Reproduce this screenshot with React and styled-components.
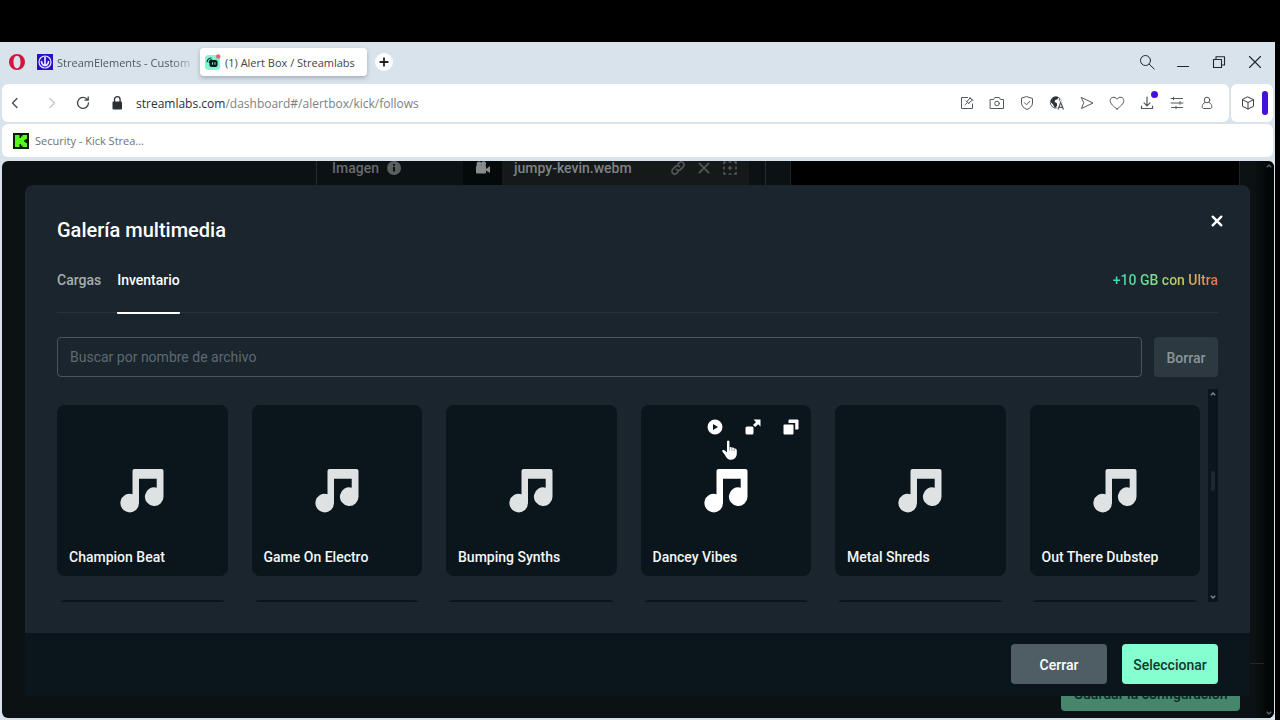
import React from "react";
import styled, { createGlobalStyle, css } from "styled-components";

const GlobalStyle = createGlobalStyle`
  *, *::before, *::after { box-sizing: border-box; }
  body { margin: 0; background: #000; }
  button, input { font: inherit; margin: 0; }
  svg { display: block; flex: none; }
`;

const chromeFont = `"Open Sans", "Noto Sans", sans-serif`;
const appFont = `Roboto, "Liberation Sans", sans-serif`;

/* ---------- browser window ---------- */

const Screen = styled.div`
  min-height: 100vh;
  padding: 42px 5px 0 0;
  display: flex;
  background: #000;
`;

const Browser = styled.div`
  flex: 1;
  min-width: 0;
  display: flex;
  flex-direction: column;
  background: #d9e3eb;
  font-family: ${chromeFont};
  font-size: 11px;
  color: #44494e;
`;

const PlainButton = styled.button`
  border: 0;
  padding: 0;
  background: none;
  color: inherit;
  display: flex;
  align-items: center;
  justify-content: center;
  cursor: pointer;
`;

const TabBar = styled.header`
  height: 42px;
  padding: 0 12px 2px 9px;
  display: flex;
  align-items: center;
`;

const TabStrip = styled.nav`
  flex: 1;
  display: flex;
  align-items: center;
  margin-left: 8px;
`;

const Tab = styled.a`
  height: 28px;
  width: ${(p) => p.$width}px;
  padding: 0 4px;
  display: flex;
  align-items: center;
  gap: 4px;
  border-radius: 4px;
  color: #50585f;
  text-decoration: none;
  white-space: nowrap;
  ${(p) =>
    p.$active &&
    css`
      padding-left: 5px;
      background: #fff;
      color: #3f4448;
      box-shadow: 0 2px 4px rgba(60, 75, 90, 0.35);
    `}
`;

const TabLabel = styled.span`
  ${(p) =>
    p.$fade &&
    css`
      mask-image: linear-gradient(to right, #000 86%, rgba(0, 0, 0, 0.3));
    `}
`;

const NewTab = styled(PlainButton)`
  width: 18px;
  height: 18px;
  margin-left: 8px;
  border-radius: 50%;
  background: #fff;
  color: #1d2226;
`;

const WindowControls = styled.div`
  display: flex;
  gap: 20px;
  color: #20262b;
`;

const Bars = styled.div`
  display: flex;
  gap: 2px;
  padding: 0 2px;
`;

const Bar = styled.div`
  height: 38px;
  display: flex;
  align-items: center;
  background: #fff;
  border-radius: 6px;
`;

const AddressBar = styled(Bar)`
  flex: 1;
  padding: 0 14px 0 5px;
`;

const Navigation = styled.div`
  display: flex;
  align-items: center;
  gap: 15px;
  padding-right: 18px;
`;

const Address = styled.span`
  flex: 1;
  padding-left: 11px;
  color: #7a7f84;
  font-size: 12px;
  b {
    font-weight: 400;
    color: #2b3034;
  }
`;

const Tools = styled.div`
  display: flex;
  gap: 14px;
  color: #54595e;
`;

const ToolButton = styled(PlainButton)`
  position: relative;
  width: 16px;
  height: 16px;
`;

const BackButton = styled(ToolButton)`
  margin-right: 6px;
`;

const ForwardButton = styled(ToolButton)`
  color: #c5c8cb;
`;

const Dot = styled.span`
  position: absolute;
  top: -4px;
  right: -3px;
  width: 7px;
  height: 7px;
  border-radius: 50%;
  background: #4410dc;
`;

const SideBar = styled(Bar)`
  width: 42px;
  padding: 0 5px 0 9px;
  justify-content: space-between;
  color: #3a4045;
`;

const SideMark = styled.span`
  width: 6px;
  height: 24px;
  border-radius: 3px;
  background: #4410dc;
`;

const Bookmarks = styled(Bar)`
  height: 33px;
  margin: 2px 2px 4px;
  padding: 0 11px;
`;

const Bookmark = styled.a`
  display: flex;
  align-items: center;
  gap: 6px;
  color: #6d7277;
  text-decoration: none;
`;

/* ---------- page behind the dialog ---------- */

const Page = styled.main`
  flex: 1;
  position: relative;
  overflow: hidden;
  margin: 0 1px 2px 2px;
  padding: 24px 24px 22px 23px;
  border-radius: 6px;
  background: #0c1214;
  font-family: ${appFont};
  font-size: 14px;
`;

const Backdrop = styled.div`
  position: absolute;
  inset: 0;
  padding: 0 34px 7px 314px;
  display: flex;
  flex-direction: column;
  justify-content: space-between;
  background: linear-gradient(to right, transparent calc(100% - 20px), #020606 calc(100% - 6px));
`;

const Settings = styled.div`
  height: 200px;
  display: flex;
  gap: 24px;
`;

const SettingsPanel = styled.div`
  width: 450px;
  padding: 0 16px 0 15px;
  border: solid #272d2f;
  border-width: 0 1px;
`;

const SettingRow = styled.div`
  height: 40px;
  margin-top: -13px;
  display: flex;
  align-items: center;
  color: #75797a;
`;

const SettingName = styled.span`
  flex: 1;
  display: flex;
  align-items: center;
  gap: 8px;
  font-weight: 500;
  color: #676c6d;
`;

const MediaIcon = styled.span`
  width: 39px;
  height: 40px;
  display: grid;
  place-items: center;
  background: #040a0b;
`;

const MediaField = styled.span`
  width: 247px;
  height: 40px;
  padding: 0 11px 0 12px;
  display: flex;
  align-items: center;
  gap: 10px;
  background: #15191a;
  font-weight: 500;
  color: #7f8384;
`;

const MediaName = styled.span`
  flex: 1;
`;

const MediaTools = styled.span`
  display: flex;
  gap: 10px;
  color: #4f5455;
`;

const Preview = styled.div`
  flex: 1;
  background: #000;
  border: solid #1d2325;
  border-width: 0 1px;
`;

const SaveBar = styled.div`
  margin-right: -24px;
  padding: 13px 24px 0 0;
  border-top: 1px solid #24282a;
  display: flex;
  justify-content: flex-end;
`;

const SaveButton = styled.button`
  height: 34px;
  width: 179px;
  border: 0;
  padding: 0;
  border-radius: 4px;
  background: #46866d;
  color: #0b2a20;
  font-weight: 500;
`;

const PageScroll = styled.div`
  position: absolute;
  inset: 0 0 0 auto;
  width: 10px;
  padding: 3px 1px 3px 0;
  display: flex;
  flex-direction: column;
  align-items: center;
  justify-content: space-between;
  color: #5c6263;
`;

/* ---------- dialog ---------- */

const Dialog = styled.section`
  position: relative;
  border-radius: 8px 8px 0 0;
  overflow: hidden;
  background: #1a252d;
  color: #fff;
`;

const DialogBody = styled.div`
  padding: 32px 32px 31px;
`;

const DialogHead = styled.div`
  height: 26px;
  display: flex;
  justify-content: space-between;
`;

const Title = styled.h1`
  margin: 0;
  font-size: 20px;
  line-height: 26px;
  font-weight: 500;
`;

const CloseButton = styled(PlainButton)`
  width: 16px;
  height: 16px;
  margin-right: -7px;
  margin-top: -4px;
`;

const MediaTabs = styled.div`
  height: 70px;
  display: flex;
  align-items: flex-start;
  gap: 16px;
  border-bottom: 1px solid #26333a;
`;

const MediaTab = styled.button`
  height: 71px;
  padding: 28px 0 23px;
  border: 0;
  border-bottom: 2px solid ${(p) => (p.$active ? "#fff" : "transparent")};
  border-radius: 1px;
  background: none;
  color: ${(p) => (p.$active ? "#fff" : "#a3aeb2")};
  font-weight: 500;
  line-height: 18px;
`;

const UltraLink = styled.a`
  margin: 28px 0 0 auto;
  line-height: 18px;
  font-weight: 500;
  text-decoration: none;
  color: transparent;
  background: linear-gradient(to right, #31e1b0, #80e08a 40%, #d6c35a 68%, #ef6e55);
  background-clip: text;
`;

const SearchRow = styled.form`
  display: flex;
  gap: 12px;
  margin-top: 24px;
`;

const SearchInput = styled.input`
  flex: 1;
  min-width: 0;
  height: 40px;
  padding: 0 12px;
  border: 1px solid #4a565c;
  border-radius: 4px;
  background: transparent;
  color: #fff;
  outline: none;
  &::placeholder {
    color: #5f6a70;
    opacity: 1;
  }
`;

const ActionButton = styled.button`
  height: 40px;
  width: ${(p) => p.$width}px;
  padding: 1px 0 0;
  border: 0;
  border-radius: 4px;
  font-weight: 500;
  background: ${(p) => p.$bg};
  color: ${(p) => p.$fg};
`;

const Library = styled.div`
  height: 213px;
  margin-top: 12px;
  display: flex;
  gap: 8px;
  overflow: hidden;
`;

const Grid = styled.ul`
  flex: 1;
  margin: 0;
  padding: 16px 0 0;
  list-style: none;
  display: grid;
  grid-template-columns: repeat(6, 1fr);
  align-content: start;
  gap: 24px;
`;

const Card = styled.li`
  position: relative;
  aspect-ratio: 1;
  padding: 14px 12px 12px;
  display: grid;
  grid-template-rows: 1fr 44px 1fr;
  justify-items: center;
  border-radius: 8px;
  background: #0a161b;
  color: ${(p) => (p.$hover ? "#fff" : "#dfe2e3")};
`;

const CardActions = styled.div`
  justify-self: end;
  display: flex;
  gap: 22px;
  color: #fff;
`;

const CardAction = styled(PlainButton)`
  width: 16px;
  height: 15px;
`;

const CardName = styled.span`
  align-self: end;
  justify-self: start;
  line-height: 14px;
  font-weight: 500;
  color: #f5f7f7;
`;

const Pointer = styled.svg`
  position: absolute;
  left: 80px;
  top: 34px;
`;

const Scrollbar = styled.div`
  width: 10px;
  padding: 3px 0;
  display: flex;
  flex-direction: column;
  align-items: center;
  justify-content: space-between;
  background: #0a161d;
  color: #7c868b;
`;

const ScrollThumb = styled.span`
  width: 4px;
  height: 20px;
  margin-top: -30px;
  border-radius: 2px;
  background: #1d292f;
`;

const DialogFoot = styled.footer`
  padding: 11px 32px 12px;
  display: flex;
  justify-content: flex-end;
  gap: 15px;
  background: #0a161b;
`;

/* ---------- icons ---------- */

const Line = ({ size = 16, width = 1, children }) => (
  <svg width={size} height={size} viewBox="0 0 16 16" fill="none" stroke="currentColor"
    strokeWidth={width} strokeLinecap="round" strokeLinejoin="round">{children}</svg>
);

const OperaLogo = () => (
  <svg width="16" height="16" viewBox="0 0 16 16" fill="#d5143c">
    <path fillRule="evenodd" d="M8 0a8 8 0 1 0 0 16A8 8 0 0 0 8 0Zm0 1.700c2.200 0 3.500 2.800 3.500 6.300s-1.300 6.300-3.500 6.300-3.500-2.800-3.500-6.300S5.800 1.700 8 1.700Z" />
  </svg>
);

const StreamElementsLogo = () => (
  <svg width="16" height="16" viewBox="0 0 16 16">
    <rect width="16" height="16" fill="#2a0fc4" />
    <g fill="none" stroke="#e8e6ff" strokeLinecap="round">
      <circle cx="8" cy="8" r="6" strokeWidth="1.200" />
      <path d="M8 3v8M4.500 7.500c.2 2.300 1.500 3.600 3.500 3.600s3.300-1.300 3.500-3.600M6 11.500h4" strokeWidth="1.700" />
    </g>
  </svg>
);

const StreamlabsLogo = () => (
  <svg width="16" height="16" viewBox="0 0 16 16">
    <rect width="15" height="15" y="1" rx="3.500" fill="#80f5d2" />
    <path d="M2.200 7.600C2.500 5.600 4 4.200 6 4M4.300 8.500C4.400 7 5.400 6 6.800 5.900" fill="none" stroke="#0b2422" strokeWidth="1.200" strokeLinecap="round" />
    <rect x="4.500" y="6" width="8" height="7" rx="2" fill="#09191b" />
    <path d="M7.500 8.700v1.600M10 8.700v1.600" stroke="#80f5d2" strokeLinecap="round" />
    <circle cx="13.200" cy="2.500" r="2.200" fill="#f0606a" />
  </svg>
);

const KickLogo = () => (
  <svg width="16" height="16" viewBox="0 0 16 16">
    <rect width="16" height="16" fill="#0c1a0a" />
    <path d="M2 2h4.500v3H8V3.500h1.500V2H14v4h-1.500v1.200H11v1.600h1.500V10H14v4H9.500v-1.500H8V11H6.500v3H2Z" fill="#53fc18" />
  </svg>
);

const toolIcons = [
  ["Edit page", <Line><path d="M8.500 2.500h-6v11h11V9M6 9.800 8.500 7.500M7.200 5.800l3 3M8 6.500l3-3.500 2.300 2.200-3.600 2.800M11 2.500l3 3" /></Line>],
  ["Snapshot", <Line><path d="M1.500 4.500H4.500l1.300-2h4.400l1.300 2h3v9h-13Z" /><circle cx="8" cy="8.500" r="2.300" /></Line>],
  ["Ad blocker", <Line><path d="M8 1.700 13.500 3.500V8c0 3-2.300 5.100-5.500 6.500C4.800 13.100 2.500 11 2.500 8V3.500ZM5.500 7.800l2 2 3.300-3.500" /></Line>],
  ["Translate", (
    <svg width="16" height="16" viewBox="0 0 16 16">
      <circle cx="7" cy="7.500" r="5.600" fill="none" stroke="currentColor" />
      <path d="M2 5c1-2.300 3-3.400 5-3.400l2.500.7-1 2-2.300.8L5.500 7l2.300 1 .3 2.500-1.600 2.300C5 12.800 4.500 10 3.700 9L2 7.600ZM10 4l1.800.3.7 3.200-1.700-.6Z" fill="#2e3337" />
      <path d="m9 14.500 2.700-7 2.800 7M10 12.300h3.500" fill="none" stroke="#fff" strokeWidth="3" />
      <path d="m9 14.500 2.700-7 2.800 7M10 12.300h3.500" fill="none" stroke="currentColor" strokeWidth="1.200" />
    </svg>
  )],
  ["Send", <Line><path d="m2.500 2.500 11.500 5.500-11.500 5.500L4.600 8Z" /></Line>],
  ["Save to pinboard", <Line><path d="M8 14C4.500 11.300 1.200 8.800 1.200 5.600 1.200 1.900 6 1 8 4.300 10 1 14.800 1.900 14.800 5.600 14.800 8.800 11.500 11.300 8 14Z" /></Line>],
  ["Downloads", <Line width={1.2}><path d="M8 2v8.500M5 7.800l3 3 3-3M2.500 11v2.500h11V11" /></Line>],
  ["Easy setup", <Line><path d="M2 3.500h11.500M2 8h12M2.500 12.500H13.500M4.500 2.200v2.600M11 6.700v2.600M7 11.200v2.600" /></Line>],
  ["Profile", <Line><circle cx="8" cy="5" r="2.800" /><path d="M5.800 7.500C4 8.500 3.200 10 3.200 11.800c0 1 .6 1.700 1.500 1.700h6.600c.9 0 1.500-.7 1.500-1.700 0-1.800-.8-3.300-2.600-4.300" /></Line>],
];

const MusicNote = () => (
  <svg width="44" height="44" viewBox="0 0 44 44" fill="currentColor">
    <path d="M12.500 2Q12.500 0 14.500 0H41.500Q43.500 0 43.500 2V27.500A9.300 9.300 0 1 1 36.700 18.700V9.700H19V34A9.300 9.300 0 1 1 12.500 25.200Z" />
  </svg>
);

const Arrow = ({ down }) => (
  <svg width="6" height="4" viewBox="0 0 6 4" fill="none" stroke="currentColor" strokeWidth="1.400">
    <path d={down ? "m.8.7 2.200 2.200L5.200.7" : "M.8 3.300 3 1.100l2.200 2.200"} />
  </svg>
);

const PlayIcon = () => (
  <svg width="16" height="16" viewBox="0 0 16 16" fill="currentColor">
    <path fillRule="evenodd" d="M8 .5a7.500 7.500 0 1 0 0 15 7.500 7.500 0 0 0 0-15ZM6 5v6l5-3Z" />
  </svg>
);

const ExpandIcon = () => (
  <svg width="16" height="16" viewBox="0 0 16 16" fill="currentColor">
    <rect x=".5" y="7.500" width="8" height="8" rx="1.500" />
    <path d="M8.500.5h7v7l-2.300-2.300-3 2.900-2.200-2.200 3-2.900Z" />
  </svg>
);

const CopyIcon = () => (
  <svg width="16" height="16" viewBox="0 0 16 16" fill="currentColor">
    <rect x=".5" y="5.500" width="10" height="10" rx="1" />
    <path d="M5.500 1.500q0-1 1-1h8q1 0 1 1v8q0 1-1 1H12.200V3.900H5.500Z" />
  </svg>
);

const HandPointer = () => (
  <Pointer width="18" height="22" viewBox="0 0 18 22" aria-hidden="true">
    <path d="M6 2.200Q7.200.8 8.400 2.200V8.200l1-.2q1 0 1.400.8l1-.2q1.100 0 1.500 1l.8-.1q1.700.1 1.700 1.900V14c0 3.800-1.900 6.700-5.700 6.700-3.400 0-4.600-2-6-4.500L1.500 12.800Q.700 11.500 1.800 11.100q1.400-.4 2.700 1L6 13.500Z" fill="#fff" />
    <path d="M8.500 8v3.500M10.900 9v2.700M13.300 9.800V12" stroke="#7d8588" strokeWidth=".8" />
  </Pointer>
);

/* ---------- content ---------- */

const tracks = [
  "Champion Beat",
  "Game On Electro",
  "Bumping Synths",
  "Dancey Vibes",
  "Metal Shreds",
  "Out There Dubstep",
];

function Track({ name, hover }) {
  return (
    <Card $hover={hover}>
      {hover ? (
        <CardActions>
          <CardAction aria-label="Reproducir"><PlayIcon /></CardAction>
          <CardAction aria-label="Ampliar"><ExpandIcon /></CardAction>
          <CardAction aria-label="Copiar"><CopyIcon /></CardAction>
        </CardActions>
      ) : <span />}
      <MusicNote />
      <CardName>{name}</CardName>
      {hover && <HandPointer />}
    </Card>
  );
}

export default function App() {
  return (
    <Screen>
      <GlobalStyle />
      <Browser>
        <TabBar>
          <OperaLogo />
          <TabStrip>
            <Tab href="#streamelements" $width={167}>
              <StreamElementsLogo />
              <TabLabel $fade>StreamElements - Custom</TabLabel>
            </Tab>
            <Tab href="#alertbox" $width={167} $active>
              <StreamlabsLogo />
              <TabLabel>(1) Alert Box / Streamlabs</TabLabel>
            </Tab>
            <NewTab aria-label="New tab"><Line size={12} width={2.4}><path d="M8 3v10M3 8h10" /></Line></NewTab>
          </TabStrip>
          <WindowControls>
            <ToolButton aria-label="Search tabs"><Line><circle cx="6.500" cy="6.500" r="5" /><path d="m10.200 10.200 5 4.800" /></Line></ToolButton>
            <ToolButton aria-label="Minimize"><Line width={1.2}><path d="M2.500 12.500h11" /></Line></ToolButton>
            <ToolButton aria-label="Restore"><Line width={1.1}><path d="M2.500 5.500h8v8h-8ZM5 5V2.800h8.500V11H11" /></Line></ToolButton>
            <ToolButton aria-label="Close"><Line width={1.1}><path d="m2.500 2.500 11 11M13.500 2.500l-11 11" /></Line></ToolButton>
          </WindowControls>
        </TabBar>

        <Bars>
          <AddressBar>
            <Navigation>
              <BackButton aria-label="Back"><Line width={1.3}><path d="M10 3.500 5.500 8l4.500 4.500" /></Line></BackButton>
              <ForwardButton aria-label="Forward" disabled><Line width={1.3}><path d="M6 3.500 10.500 8 6 12.500" /></Line></ForwardButton>
              <ToolButton aria-label="Reload"><Line width={1.3}><path d="M12.500 4.700A5.500 5.500 0 1 0 13.500 8M13.200 2v3.200H10" /></Line></ToolButton>
            </Navigation>
            <svg width="16" height="16" viewBox="0 0 16 16">
              <rect x="3.500" y="6.500" width="9.500" height="8" rx="1" fill="#2b3034" />
              <path d="M5.500 7V4.500a2.800 2.800 0 0 1 5.600 0V7" fill="none" stroke="#2b3034" strokeWidth="1.300" />
            </svg>
            <Address><b>streamlabs.com</b>/dashboard#/alertbox/kick/follows</Address>
            <Tools>
              {toolIcons.map(([label, icon]) => (
                <ToolButton key={label} aria-label={label}>
                  {icon}
                  {label === "Downloads" && <Dot />}
                </ToolButton>
              ))}
            </Tools>
          </AddressBar>
          <SideBar>
            <ToolButton aria-label="Extensions"><Line><path d="m8 2 5.500 2.700v6.600L8 14l-5.500-2.700V4.700ZM2.500 4.700 8 7.500l5.500-2.800M8 7.500V14" /></Line></ToolButton>
            <SideMark />
          </SideBar>
        </Bars>
        <Bookmarks>
          <Bookmark href="#kick"><KickLogo />Security - Kick Strea...</Bookmark>
        </Bookmarks>

        <Page>
          <Backdrop>
            <Settings>
              <SettingsPanel>
                <SettingRow>
                  <SettingName>
                    Imagen
                    <svg width="14" height="14" viewBox="0 0 14 14"><circle cx="7" cy="7" r="7" fill="#5a5f60" /><path d="M7 6v4.500M7 3v1.700" stroke="#0c1214" strokeWidth="2" /></svg>
                  </SettingName>
                  <MediaIcon>
                    <svg width="16" height="14" viewBox="0 0 16 14" fill="#888c8d"><circle cx="4" cy="3" r="2.500" /><circle cx="8.500" cy="2.800" r="2.500" /><rect x="1" y="4.500" width="10" height="8" rx="1" /><path d="m11 8 4-3v7l-4-2.500Z" /></svg>
                  </MediaIcon>
                  <MediaField>
                    <MediaName>jumpy-kevin.webm</MediaName>
                    <MediaTools>
                      <Line width={1.8}><path d="M6.500 9.500a2.800 2.800 0 0 0 4 0l2.700-2.700a2.800 2.800 0 0 0-4-4L8 4M9.500 6.500a2.800 2.800 0 0 0-4 0L2.800 9.200a2.800 2.800 0 0 0 4 4L8 12" /></Line>
                      <Line width={1.8}><path d="m3.500 3.500 9 9M12.500 3.500l-9 9" /></Line>
                      <Line width={1.7}><path d="M2 3.500V2h1.500M7.200 2h1.600M12.500 2H14v1.500M14 7.200v1.600M14 12.500V14h-1.500M8.800 14H7.200M3.500 14H2v-1.500M2 8.800V7.200M8 6.500v3M6.500 8h3" /></Line>
                    </MediaTools>
                  </MediaField>
                </SettingRow>
              </SettingsPanel>
              <Preview />
            </Settings>
            <SaveBar><SaveButton>Guardar la configuración</SaveButton></SaveBar>
          </Backdrop>
          <PageScroll><Arrow /><Arrow down /></PageScroll>

          <Dialog role="dialog" aria-labelledby="gallery-title">
            <DialogBody>
              <DialogHead>
                <Title id="gallery-title">Galería multimedia</Title>
                <CloseButton aria-label="Cerrar galería"><Line width={2.4}><path d="m3.700 3.700 8.600 8.600M12.300 3.700l-8.600 8.600" /></Line></CloseButton>
              </DialogHead>
              <MediaTabs>
                <MediaTab>Cargas</MediaTab>
                <MediaTab $active>Inventario</MediaTab>
                <UltraLink href="#ultra">+10 GB con Ultra</UltraLink>
              </MediaTabs>
              <SearchRow>
                <SearchInput aria-label="Buscar" placeholder="Buscar por nombre de archivo" />
                <ActionButton type="button" $width={64} $bg="#2c3940" $fg="#8b9599">Borrar</ActionButton>
              </SearchRow>
              <Library>
                <Grid>
                  {tracks.map((name) => <Track key={name} name={name} hover={name === "Dancey Vibes"} />)}
                  {tracks.map((name) => <Card key={"next " + name} aria-hidden="true" />)}
                </Grid>
                <Scrollbar><Arrow /><ScrollThumb /><Arrow down /></Scrollbar>
              </Library>
            </DialogBody>
            <DialogFoot>
              <ActionButton $width={96} $bg="#4f5e65" $fg="#fff">Cerrar</ActionButton>
              <ActionButton $width={96} $bg="#85ffd0" $fg="#0d3a2c">Seleccionar</ActionButton>
            </DialogFoot>
          </Dialog>
        </Page>
      </Browser>
    </Screen>
  );
}
